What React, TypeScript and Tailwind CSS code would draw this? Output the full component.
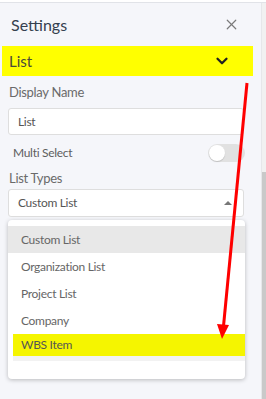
import { X, ChevronDown } from "lucide-react";

const options = ["Custom List", "Organization List", "Project List", "Company"];

export default function App() {
  return (
    <div className="relative flex h-[399px] w-[266px] overflow-hidden bg-white pt-[2px] font-['Lato',sans-serif]">
      <div className="flex w-full border-t border-[#e1e3e8]">
        {/* panel */}
        <div className="flex w-[261px] flex-col bg-[#f5f6fa]">
          <div className="flex h-[43px] items-center justify-between pl-[11px] pr-[21px]">
            <span className="text-[16px] text-[#34404f]">Settings</span>
            <X className="h-[17px] w-[17px] text-[#7a7a7a]" strokeWidth={1.7} />
          </div>

          <div className="ml-[2px] flex h-[30px] w-[251px] items-center justify-between bg-[#ffff00] pl-[7px] pr-[22px]">
            <span className="text-[15px] text-[#4a4a3a]">List</span>
            <ChevronDown className="h-[18px] w-[18px] text-[#222]" strokeWidth={3} />
          </div>

          <div className="flex flex-col px-[8px] tracking-[-0.3px]">
            <div className="mt-[8px] pl-[1px] text-[13px] leading-[16px] text-[#6a6a6a]">Display Name</div>
            <div className="mt-[8px] flex h-[27px] w-[236px] items-center rounded-[3px] border border-[#dedede] bg-white pl-[9px] text-[12px] text-[#555]">
              List
            </div>

            <div className="mt-[8px] flex h-[19px] w-[237px] items-center justify-between pl-[5px]">
              <span className="text-[12px] text-[#5e5e5e]">Multi Select</span>
              <div className="flex h-[18px] w-[37px] items-center rounded-full bg-[#e1e1e1] px-[1px]">
                <div className="h-[16px] w-[16px] rounded-full bg-white shadow-[0_1px_1px_rgba(0,0,0,0.15)]" />
              </div>
            </div>

            <div className="mt-[8px] pl-[1px] text-[13px] leading-[16px] text-[#6a6a6a]">List Types</div>
            <div className="mt-[3px] flex h-[28px] w-[236px] items-center justify-between rounded-[3px] border border-[#dedede] bg-white pl-[9px] pr-[11px] text-[12px] text-[#555]">
              <span>Custom List</span>
              <svg width="8" height="4" viewBox="0 0 8 4">
                <path d="M0 4 L4 0 L8 4 Z" fill="#777" />
              </svg>
            </div>

            <div className="mt-[3px] w-[237px] rounded-[4px] bg-white pt-[6px] pb-[18px] shadow-[0_1px_4px_rgba(0,0,0,0.25)]">
              {options.map((o, i) => (
                <div
                  key={o}
                  className={`flex h-[27px] items-center pl-[13px] text-[12px] text-[#666] ${i === 0 ? "bg-[#e8e8e8]" : ""}`}
                >
                  {o}
                </div>
              ))}
              <div className="flex h-[27px] flex-col pl-[5px]">
                <div className="flex h-[22px] items-center bg-[#f5f500] pl-[8px] text-[12px] text-[#555]">WBS Item</div>
                <div className="h-[5px] bg-[#f2f2f2]" />
              </div>
            </div>
          </div>
        </div>

        {/* scrollbar */}
        <div className="flex w-[5px] flex-col border-l border-[#e6e7ea] bg-[#f1f1f1]">
          <div className="h-[169px]" />
          <div className="flex-1 bg-[#c9c9c9]" />
        </div>
      </div>

      {/* red annotation arrow */}
      <svg className="pointer-events-none absolute left-0 top-0" width="266" height="399" viewBox="0 0 266 399">
        <line x1="247" y1="83" x2="223.5" y2="326" stroke="#ff0000" strokeWidth="3" />
        <path d="M217 324 L229 325 L222 339 Z" fill="#ff0000" />
      </svg>
    </div>
  );
}
